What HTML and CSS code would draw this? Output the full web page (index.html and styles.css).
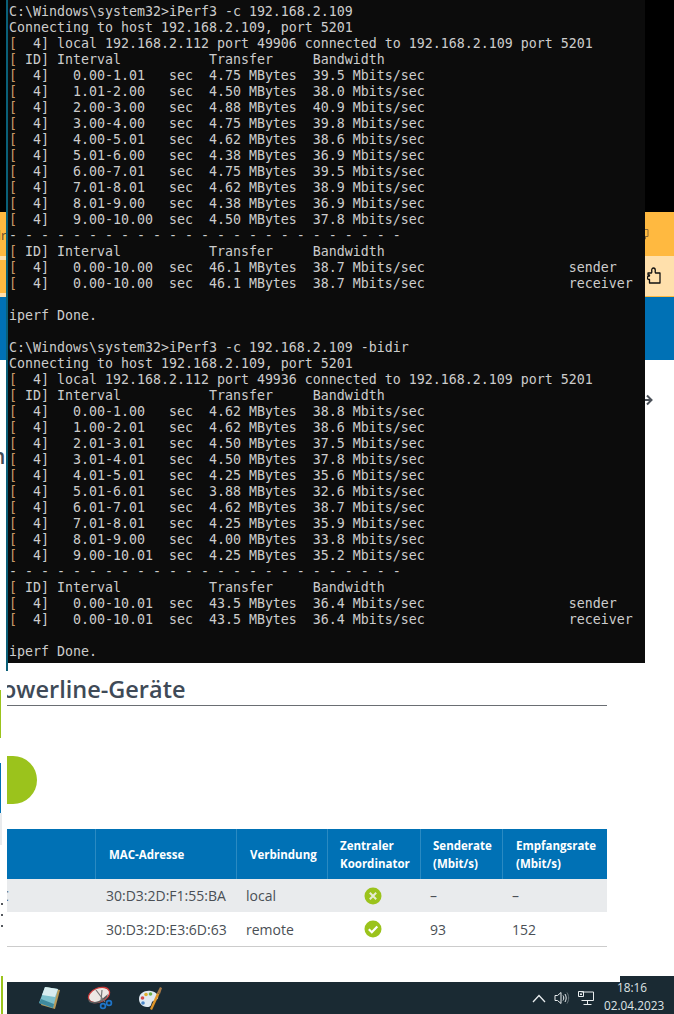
FILE: index.html
```html
<!DOCTYPE html>
<html lang="de">
<head>
<meta charset="utf-8">
<title>iPerf3 / Powerline-Geräte</title>
<link rel="stylesheet" href="styles.css">
</head>
<body>
<div class="desk">
  <div class="strip">
    <div class="strip-black"></div>
    <div class="strip-orange strip-o1"><span class="strip-text">dr</span></div>
    <div class="strip-light strip-l1"></div>
    <div class="strip-orange strip-o2"></div>
    <div class="strip-light strip-l2"></div>
    <div class="strip-blue"></div>
    <div class="strip-white"><span class="strip-n">n</span></div>
    <div class="strip-green"></div>
    <div class="strip-gap"></div>
    <div class="strip-blueline"></div>
    <div class="strip-grey"></div>
    <div class="strip-marks"><i></i><i></i><i></i></div>
    <div class="strip-greenline"></div>
  </div>

  <div class="site">
    <div class="band-black"></div>
    <div class="band-orange">
      <svg class="ico-copy" width="10" height="12" viewBox="0 0 10 12"><path d="M3 1.500h5v7H3zM.5 4H3M.5 4v7h5V8.500" fill="none" stroke="#8a6a33"/></svg>
    </div>
    <div class="band-light">
      <svg class="ico-puzzle" width="14" height="17" viewBox="0 0 14 17"><path d="M1 6h3.500c.6-1 .2-1.500.2-2.500C4.700 2 5.500 1 6.500 1s1.800 1 1.800 2.500c0 1-.4 1.500.2 2.500H13v10H2.500v-3.500H1.800C.9 12.500.5 12 .5 11v-.5C.5 9.500 1 9 2 9h.5V7.800H1z" fill="none" stroke="#111" stroke-width="1.300" stroke-linejoin="round"/></svg>
    </div>
    <div class="band-blue"></div>
    <div class="content">
      <svg class="ico-arrow" width="9" height="12" viewBox="0 0 9 12"><path d="M2 1.500 6.500 6 2 10.500M0 6h6" fill="none" stroke="#4a5058" stroke-width="2"/></svg>
      <h2 class="heading">Powerline-Geräte</h2>
      <div class="rule"></div>
      <div class="dot"></div>
      <div class="devices">
        <div class="row row-head">
          <div class="cell cell-name"></div>
          <div class="cell cell-mac">MAC-Adresse</div>
          <div class="cell cell-conn">Verbindung</div>
          <div class="cell cell-coord">Zentraler<br>Koordinator</div>
          <div class="cell cell-tx">Senderate<br>(Mbit/s)</div>
          <div class="cell cell-rx">Empfangsrate<br>(Mbit/s)</div>
        </div>
        <div class="row row-grey">
          <div class="cell cell-name cell-clip">C</div>
          <div class="cell cell-mac">30:D3:2D:F1:55:BA</div>
          <div class="cell cell-conn">local</div>
          <div class="cell cell-coord">
            <svg class="status" width="18" height="18" viewBox="0 0 18 18"><circle cx="9" cy="9" r="8.500" fill="#9bc31c"/><path d="M5.800 5.800l6.400 6.400M12.200 5.800l-6.400 6.400" stroke="#e6ecd2" stroke-width="2"/></svg>
          </div>
          <div class="cell cell-tx">–</div>
          <div class="cell cell-rx">–</div>
        </div>
        <div class="row row-white">
          <div class="cell cell-name"></div>
          <div class="cell cell-mac">30:D3:2D:E3:6D:63</div>
          <div class="cell cell-conn">remote</div>
          <div class="cell cell-coord">
            <svg class="status" width="18" height="18" viewBox="0 0 18 18"><circle cx="9" cy="9" r="8.500" fill="#9bc31c"/><path d="M4.800 9.300l3 2.900 5.500-5.700" fill="none" stroke="#fff" stroke-width="2.200"/></svg>
          </div>
          <div class="cell cell-tx">93</div>
          <div class="cell cell-rx">152</div>
        </div>
      </div>
    </div>
    <div class="taskbar">
      <div class="apps">
        <svg class="app" width="24" height="24" viewBox="0 0 24 24">
          <path d="M8 1 22 4 17 23 3 19z" fill="#b89a58"/>
          <path d="M7 1 20 3 15 22 1 17z" fill="#7cc0cc"/>
          <path d="M7 1 20 3 17 11 4 9z" fill="#d8ecef"/>
          <path d="M1 17 15 22 16 18 3 13z" fill="#3f8a9e"/>
        </svg>
        <svg class="app" width="26" height="24" viewBox="0 0 26 24">
          <ellipse cx="12" cy="9" rx="11" ry="7" transform="rotate(-22 12 9)" fill="#ece8e4" stroke="#cc3a3a" stroke-width="1.300"/>
          <path d="M1 12c2 5 9 5 14 1l6-5-1 3c-5 6-13 8-18 5z" fill="#5c5c5c"/>
          <path d="M9 4 18 16M15 4 14 15" stroke="#777" stroke-width="1.200"/>
          <circle cx="16" cy="20" r="2.400" fill="none" stroke="#1f74c8" stroke-width="1.700"/>
          <circle cx="22" cy="17" r="2.400" fill="none" stroke="#1f74c8" stroke-width="1.700"/>
        </svg>
        <svg class="app" width="26" height="24" viewBox="0 0 26 24">
          <path d="M1 13C1 7 7 4 13 5c6 1 8 5 7 7-1 3-5 2-6 4-1 3-1 5-5 5-5 0-8-4-8-8z" fill="#dfe9f2"/>
          <circle cx="4.500" cy="12" r="1.800" fill="#d64a4a"/>
          <circle cx="8" cy="8.500" r="1.800" fill="#e0b030"/>
          <circle cx="12.500" cy="8" r="1.800" fill="#6fb04a"/>
          <circle cx="5" cy="17" r="1.800" fill="#4a86c8"/>
          <path d="M12 23 19 7l2.500 1L14 24z" fill="#e0962a"/>
          <path d="M19 7l3-6 2 1-2 6z" fill="#a87a48"/>
        </svg>
      </div>
      <div class="tray">
        <svg width="14" height="9" viewBox="0 0 14 9"><path d="M1 8 7 1.500 13 8" fill="none" stroke="#e8ecee" stroke-width="1.300"/></svg>
        <svg class="tray-sound" width="16" height="14" viewBox="0 0 16 14"><path d="M1 4.500h2.500L7 1.500v11L3.500 9.500H1zM9 4.500c1 1.500 1 3.500 0 5M11 3c1.600 2.500 1.600 5.500 0 8" fill="none" stroke="#e8ecee"/><path d="M13 1.500c2.200 3.500 2.200 7.500 0 11" fill="none" stroke="#6a767c"/></svg>
        <svg class="tray-net" width="16" height="14" viewBox="0 0 16 14"><path d="M3.500 1h12v8.500H3.500M9.500 9.500V13M5.500 13.500h8M.5 .5h5v5h-5z" fill="none" stroke="#e8ecee"/><path d="M2 2.500h2v1.500H2z" fill="#e8ecee"/></svg>
      </div>
    </div>
    <div class="clock"><span class="clock-time">18:16</span><span class="clock-date">02.04.2023</span></div>
  </div>

  <pre class="terminal">C:\Windows\system32&gt;iPerf3 -c 192.168.2.109
Connecting to host 192.168.2.109, port 5201
<b>[</b>  4] local 192.168.2.112 port 49906 connected to 192.168.2.109 port 5201
<b>[</b> ID] Interval           Transfer     Bandwidth
<b>[</b>  4]   0.00-1.01   sec  4.75 MBytes  39.5 Mbits/sec
<b>[</b>  4]   1.01-2.00   sec  4.50 MBytes  38.0 Mbits/sec
<b>[</b>  4]   2.00-3.00   sec  4.88 MBytes  40.9 Mbits/sec
<b>[</b>  4]   3.00-4.00   sec  4.75 MBytes  39.8 Mbits/sec
<b>[</b>  4]   4.00-5.01   sec  4.62 MBytes  38.6 Mbits/sec
<b>[</b>  4]   5.01-6.00   sec  4.38 MBytes  36.9 Mbits/sec
<b>[</b>  4]   6.00-7.01   sec  4.75 MBytes  39.5 Mbits/sec
<b>[</b>  4]   7.01-8.01   sec  4.62 MBytes  38.9 Mbits/sec
<b>[</b>  4]   8.01-9.00   sec  4.38 MBytes  36.9 Mbits/sec
<b>[</b>  4]   9.00-10.00  sec  4.50 MBytes  37.8 Mbits/sec
- - - - - - - - - - - - - - - - - - - - - - - - -
<b>[</b> ID] Interval           Transfer     Bandwidth
<b>[</b>  4]   0.00-10.00  sec  46.1 MBytes  38.7 Mbits/sec                  sender
<b>[</b>  4]   0.00-10.00  sec  46.1 MBytes  38.7 Mbits/sec                  receiver

iperf Done.

C:\Windows\system32&gt;iPerf3 -c 192.168.2.109 -bidir
Connecting to host 192.168.2.109, port 5201
<b>[</b>  4] local 192.168.2.112 port 49936 connected to 192.168.2.109 port 5201
<b>[</b> ID] Interval           Transfer     Bandwidth
<b>[</b>  4]   0.00-1.00   sec  4.62 MBytes  38.8 Mbits/sec
<b>[</b>  4]   1.00-2.01   sec  4.62 MBytes  38.6 Mbits/sec
<b>[</b>  4]   2.01-3.01   sec  4.50 MBytes  37.5 Mbits/sec
<b>[</b>  4]   3.01-4.01   sec  4.50 MBytes  37.8 Mbits/sec
<b>[</b>  4]   4.01-5.01   sec  4.25 MBytes  35.6 Mbits/sec
<b>[</b>  4]   5.01-6.01   sec  3.88 MBytes  32.6 Mbits/sec
<b>[</b>  4]   6.01-7.01   sec  4.62 MBytes  38.7 Mbits/sec
<b>[</b>  4]   7.01-8.01   sec  4.25 MBytes  35.9 Mbits/sec
<b>[</b>  4]   8.01-9.00   sec  4.00 MBytes  33.8 Mbits/sec
<b>[</b>  4]   9.00-10.01  sec  4.25 MBytes  35.2 Mbits/sec
- - - - - - - - - - - - - - - - - - - - - - - - -
<b>[</b> ID] Interval           Transfer     Bandwidth
<b>[</b>  4]   0.00-10.01  sec  43.5 MBytes  36.4 Mbits/sec                  sender
<b>[</b>  4]   0.00-10.01  sec  43.5 MBytes  36.4 Mbits/sec                  receiver

iperf Done.</pre>
  <div class="terminal-edge"></div>
</div>
</body>
</html>
```
FILE: styles.css
```css
* { box-sizing: border-box; }
html, body { margin: 0; padding: 0; background: #fff; }
.desk {
  position: relative;
  width: 674px;
  height: 1014px;
  overflow: hidden;
  font-family: "Open Sans", "Liberation Sans", sans-serif;
}

/* sliver of another window at the left edge */
.strip {
  position: absolute;
  left: 0;
  top: 0;
  width: 7px;
  height: 1014px;
  display: flex;
  flex-direction: column;
  overflow: hidden;
  background: #fff;
}
.strip-black { height: 212px; background: #000; }
.strip-orange { background: #ffb940; }
.strip-o1 { height: 44px; position: relative; overflow: hidden; }
.strip-l1 { height: 4px; }
.strip-o2 { height: 33px; }
.strip-l2 { height: 4px; }
.strip-light { background: #ffe0ac; }
.strip-blue { height: 63px; background: #0071b5; }
.strip-text {
  position: absolute;
  left: -7px;
  top: 14px;
  font-size: 13px;
  line-height: 18px;
  color: #5a4a30;
}
.strip-white { height: 330px; position: relative; overflow: hidden; }
.strip-n {
  position: absolute;
  left: -8px;
  top: 82px;
  font-size: 21px;
  line-height: 28px;
  font-weight: 600;
  color: #3f4a57;
}
.strip-green { width: 1px; height: 48px; background: #9bc31c; }
.strip-gap { height: 25px; }
.strip-blueline { width: 1px; height: 50px; background: #0071b5; }
.strip-grey { width: 2px; height: 32px; background: #e9ebed; }
.strip-marks {
  height: 131px;
  display: flex;
  flex-direction: column;
  gap: 9px;
  padding: 58px 0 0 1px;
}
.strip-marks i { display: block; width: 2px; height: 2px; background: #55595e; }
.strip-greenline { width: 2px; margin-left: 1px; height: 38px; background: #9bc31c; }

/* page behind the console */
.site {
  position: relative;
  margin-left: 7px;
  height: 1014px;
  display: flex;
  flex-direction: column;
}
.band-black { height: 212px; background: #000; flex: none; }
.band-orange { height: 44px; background: #ffb940; flex: none; position: relative; }
.band-light {
  height: 41px;
  background: #ffe0ac;
  border-bottom: 1px solid #ffb940;
  flex: none;
  position: relative;
}
.band-blue { height: 63px; background: #0071b5; flex: none; }
.ico-copy { position: absolute; left: 633px; top: 16px; }
.ico-puzzle { position: absolute; left: 640px; top: 11px; }
.content { position: relative; flex: 1; min-height: 0; }
.ico-arrow { position: absolute; left: 638px; top: 34px; }
.heading {
  margin: 313px 0 0;
  height: 32px;
  overflow: hidden;
  white-space: nowrap;
  font-size: 23.500px;
  line-height: 32px;
  font-weight: 600;
  color: #3f4a57;
  text-indent: -19.500px;
}
.rule { width: 600px; height: 1px; margin-top: 0; background: #6a6e73; }
.dot {
  width: 30px;
  height: 48px;
  margin-top: 50px;
  background: #9bc31c;
  border-radius: 0 24px 24px 0 / 0 24px 24px 0;
}
.devices { width: 600px; margin-top: 25px; font-size: 14px; color: #4a4f55; }
.row { display: flex; align-items: center; }
.row-head {
  height: 50px;
  background: #0071b5;
  color: #fff;
  font-weight: 700;
  font-size: 11.500px;
  line-height: 18px;
}
.row-grey { height: 33px; background: #e9ebed; }
.row-white { height: 35px; border-bottom: 1px solid #ccc; }
.cell { height: 100%; display: flex; flex-direction: column; justify-content: center; flex: none; white-space: nowrap; }
.row-head .cell { display: block; padding-top: 8px; border-right: 1px solid #2a8ac2; }
.row-head .cell:last-child { border-right: 0; }
.row-head .cell-mac, .row-head .cell-conn { padding-top: 17px; }
.cell-name { width: 89px; }
.cell-clip { padding-left: 0; text-indent: -7px; overflow: hidden; }
.cell-mac { width: 141px; padding-left: 10px; }
.cell-conn { width: 91px; padding-left: 9px; }
.cell-coord { width: 93px; align-items: center; padding-right: 4px; }
.cell-tx { width: 82px; padding-left: 9px; }
.cell-rx { width: 104px; padding-left: 9px; }
.row-head .cell-mac { padding-left: 13px; }
.row-head .cell-conn { padding-left: 13px; }
.row-head .cell-coord { padding-left: 12px; padding-right: 0; }
.row-head .cell-tx { padding-left: 12px; }
.row-head .cell-rx { padding-left: 13px; }
.status { display: block; }

.taskbar {
  height: 32px;
  flex: none;
  background: #1a2a33;
  display: flex;
  align-items: center;
  justify-content: space-between;
}
.apps { display: flex; align-items: center; gap: 25px; padding-left: 31px; }
.app { display: block; filter: blur(.4px); }
.tray { display: flex; align-items: center; gap: 8px; padding-right: 80px; }
.clock {
  position: absolute;
  left: 597px;
  top: 976px;
  width: 70px;
  height: 38px;
  display: flex;
  flex-direction: column;
  align-items: flex-start;
  color: #dfe4e6;
  font-size: 11.800px;
  line-height: 18px;
}
.clock::before {
  content: "";
  position: absolute;
  left: 16px;
  top: 0;
  right: 0;
  height: 6px;
  background: #1a2a33;
}
.clock-time, .clock-date { position: relative; }
.clock-time { margin-top: 2px; margin-left: 13px; }
.clock-date { margin-top: -1px; margin-bottom: 0; top: 1px; }

/* console window */
.terminal {
  position: absolute;
  left: 8px;
  top: 0;
  width: 637px;
  height: 663px;
  margin: 0;
  padding: 4px 0 0 1px;
  overflow: hidden;
  background: #0c0c0c;
  color: #cccccc;
  font-family: "DejaVu Sans Mono", "Liberation Mono", monospace;
  font-size: 13.290px;
  line-height: 16px;
}
.terminal b { font-weight: 400; color: #c79a68; }
.terminal-edge {
  position: absolute;
  left: 6px;
  top: 0;
  width: 2px;
  height: 671px;
  background: #0a5f78;
}
```
